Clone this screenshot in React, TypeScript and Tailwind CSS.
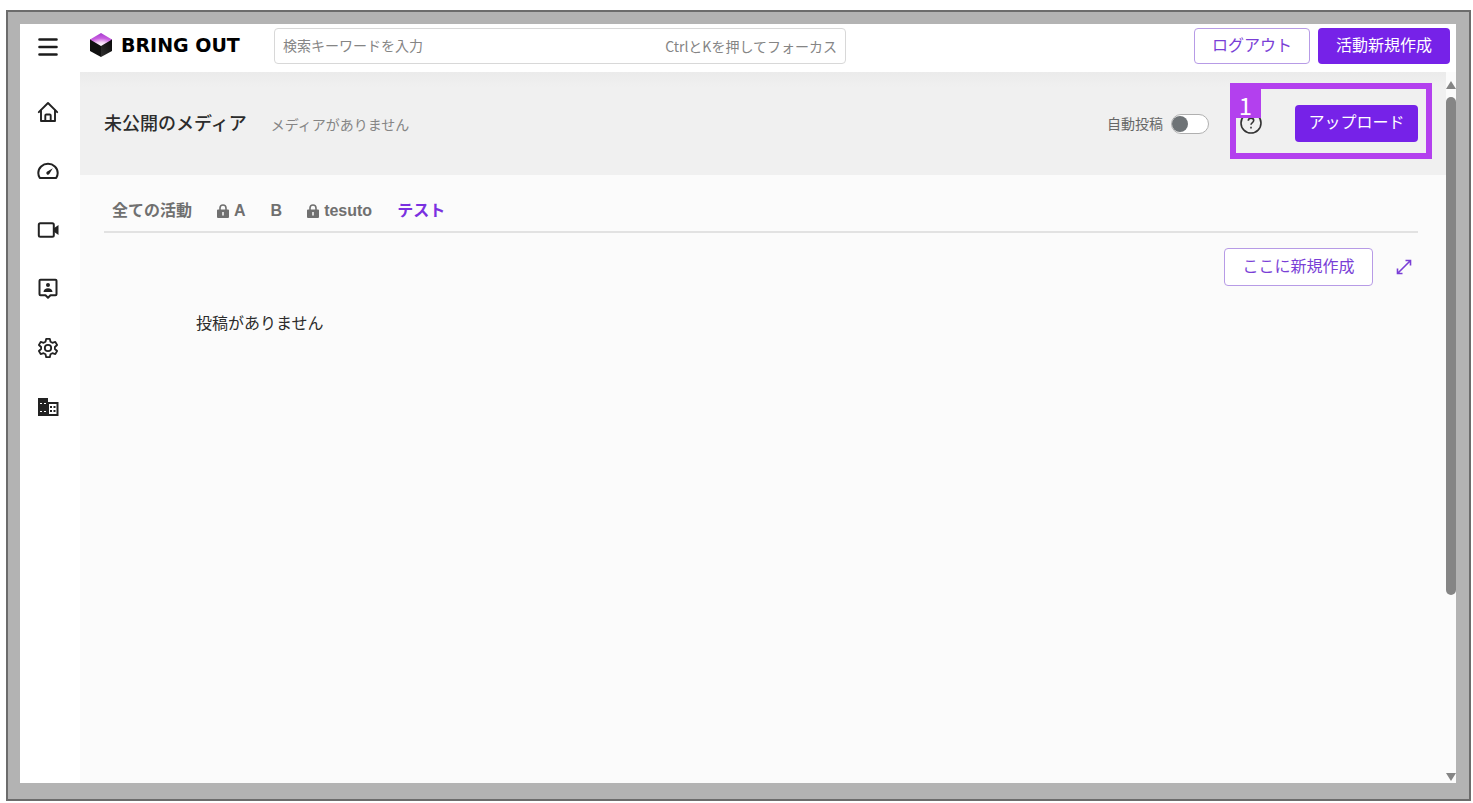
function MenuIcon() {
  return (
    <svg viewBox="0 0 20 20" className="size-5" stroke="#1c1c1c" strokeWidth="2.600" strokeLinecap="round" aria-hidden="true">
      <path d="M1.500 2.500h17M1.500 10h17M1.500 17.500h17" />
    </svg>
  );
}

function CubeLogo() {
  return (
    <svg viewBox="0 0 22 24" className="h-6 w-[22px]" aria-hidden="true">
      <defs>
        <radialGradient id="top" cx="0.5" cy="1" r="1">
          <stop offset="0" stopColor="#ffffff" />
          <stop offset="0.3" stopColor="#f3d3f7" />
          <stop offset="0.6" stopColor="#c95fe0" />
          <stop offset="1" stopColor="#a63ad0" />
        </radialGradient>
        <linearGradient id="right" x1="0" y1="1" x2="1" y2="0">
          <stop offset="0" stopColor="#303030" />
          <stop offset="1" stopColor="#080808" />
        </linearGradient>
      </defs>
      <path d="M0 6 11 12v12L0 18z" fill="#111" />
      <path d="M22 6 11 12v12l11-6z" fill="url(#right)" />
      <path d="M11 0l11 6.500L11 13 0 6.500z" fill="url(#top)" />
    </svg>
  );
}

function HomeIcon() {
  return (
    <svg viewBox="0 0 22 22" className="size-[22px]" fill="none" stroke="currentColor" strokeWidth="1.900" strokeLinejoin="round" strokeLinecap="round" aria-hidden="true">
      <path d="M1.800 11.200 11 2l9.200 9.200" />
      <path d="M4 9.500V20h14V9.500" />
      <path d="M8.300 20v-5.500a1 1 0 0 1 1-1h3.400a1 1 0 0 1 1 1V20" />
    </svg>
  );
}

function GaugeIcon() {
  return (
    <svg viewBox="0 0 22 22" className="size-[22px]" fill="none" stroke="currentColor" strokeWidth="2" strokeLinejoin="round" aria-hidden="true">
      <path d="M2.800 18C1.800 16.500 1.300 14.500 1.300 13a9.700 9.300 0 0 1 19.400 0c0 1.500-.5 3.500-1.500 5z" />
      <path d="M15.800 8.200l-5.900 3.500a1.700 1.700 0 1 0 2.400 2.400z" fill="currentColor" stroke="none" />
    </svg>
  );
}

function VideoIcon() {
  return (
    <svg viewBox="0 0 22 22" className="size-[22px]" fill="none" stroke="currentColor" strokeWidth="2" aria-hidden="true">
      <rect x="1.800" y="4.300" width="15" height="13.400" rx="1.500" />
      <path d="M16.500 9.500l5-3.500v10l-5-3.500z" fill="currentColor" stroke="none" />
    </svg>
  );
}

function ContactIcon() {
  return (
    <svg viewBox="0 0 22 22" className="size-[22px]" fill="none" stroke="currentColor" strokeWidth="2" strokeLinejoin="round" aria-hidden="true">
      <path d="M3.500 1.800h15a1 1 0 0 1 1 1v13.400a1 1 0 0 1-1 1h-5L11 19.700l-2.500-2.500h-5a1 1 0 0 1-1-1V2.800a1 1 0 0 1 1-1z" />
      <circle cx="11" cy="7" r="2" fill="currentColor" stroke="none" />
      <path d="M6.500 14c0-2.500 2-3.800 4.500-3.800s4.500 1.300 4.500 3.800z" fill="currentColor" stroke="none" />
    </svg>
  );
}

function GearIcon() {
  return (
    <svg viewBox="0 0 22 22" className="size-[22px]" fill="none" stroke="currentColor" strokeWidth="1.800" strokeLinejoin="round" aria-hidden="true">
      <path d="M9.200 1.800h3.600l.7 2.900 1.900 1.100 2.900-.9 1.800 3.100-2.200 2v2l2.200 2-1.800 3.100-2.900-.9-1.900 1.100-.7 2.900H9.200l-.7-2.900-1.900-1.100-2.900.9L1.900 14l2.200-2v-2l-2.200-2 1.800-3.100 2.900.9 1.900-1.100z" />
      <circle cx="11" cy="11" r="3.200" />
    </svg>
  );
}

function BuildingIcon() {
  return (
    <svg viewBox="0 0 22 22" className="size-[22px]" aria-hidden="true">
      <path d="M1 2h10v18H1z" fill="currentColor" />
      <path d="M11 7h9.500v12H11z" fill="#fff" stroke="currentColor" strokeWidth="2" />
      <path d="M3 7.500h2M7 7.500h2M3 15.500h2M7 15.500h2" stroke="#fff" strokeWidth="1.200" />
      <path d="M13 11h2M16.500 11h2M13 15h2M16.500 15h2" stroke="currentColor" strokeWidth="2" />
    </svg>
  );
}

function LockIcon() {
  return (
    <svg viewBox="0 0 12 14" className="h-[14px] w-3" aria-hidden="true">
      <path d="M3 6V4a3 3 0 0 1 6 0v2" fill="none" stroke="currentColor" strokeWidth="1.600" />
      <path d="M1 5.500h10a1 1 0 0 1 1 1V13a1 1 0 0 1-1 1H1a1 1 0 0 1-1-1V6.500a1 1 0 0 1 1-1z" fill="currentColor" />
      <path d="M6 8v3.500" stroke="#fafafa" strokeWidth="1.500" />
    </svg>
  );
}

function HelpIcon() {
  return (
    <svg viewBox="0 0 22 22" className="size-[22px]" fill="none" stroke="#333" strokeWidth="1.600" aria-hidden="true">
      <circle cx="11" cy="11" r="10" />
      <path d="M8.300 8.800c0-1.700 1.200-2.700 2.700-2.700s2.700 1 2.700 2.500c0 2-2.700 2-2.700 4.200M11 14.700v1.800" />
    </svg>
  );
}

function ExpandIcon() {
  return (
    <svg viewBox="0 0 16 16" className="size-4" fill="none" stroke="currentColor" strokeWidth="1.600" aria-hidden="true">
      <path d="M1.500 14.500l13-13M9.500 1.500h5v5M1.500 9.500v5h5" />
    </svg>
  );
}

const navItems = [
  { label: "ホーム", icon: <HomeIcon /> },
  { label: "ダッシュボード", icon: <GaugeIcon /> },
  { label: "ビデオ", icon: <VideoIcon /> },
  { label: "連絡先", icon: <ContactIcon /> },
  { label: "設定", icon: <GearIcon /> },
  { label: "会社", icon: <BuildingIcon /> },
];

const tabs = [
  { label: "全ての活動", locked: false },
  { label: "A", locked: true },
  { label: "B", locked: false },
  { label: "tesuto", locked: true },
  { label: "テスト", locked: false, active: true },
];

export default function App() {
  return (
    <div className="h-screen bg-white pt-[10px] pr-[2px] pb-[2px] pl-[6px] font-['Liberation_Sans','Noto_Sans_CJK_JP',sans-serif]">
      <div className="h-full border-2 border-[#6c6c6c] bg-[#b3b3b3] pt-3 pr-[13px] pb-4 pl-3">
        <div className="flex h-full flex-col bg-white text-[#2c2c2c]">
          <header className="flex h-12 shrink-0 items-start pt-1 pr-[6px]">
            <button type="button" aria-label="メニュー" className="flex h-[38px] w-[56px] items-center justify-center">
              <MenuIcon />
            </button>
            <a href="#" className="ml-[14px] flex h-[34px] items-center gap-[9px] text-black">
              <CubeLogo />
              <span className="w-[122px] whitespace-nowrap font-['DejaVu_Sans',sans-serif] text-[19px] font-bold">BRING OUT</span>
            </a>
            <div className="ml-[31px] flex h-9 w-[572px] items-center rounded border border-[#d8d8d8] px-2 text-[#858585]">
              <input
                type="text"
                aria-label="検索"
                placeholder="検索キーワードを入力"
                className="min-w-0 flex-1 text-[14px] outline-none placeholder:text-[#858585]"
              />
              <span className="font-['Noto_Sans_CJK_JP',sans-serif] text-[14px]">CtrlとKを押してフォーカス</span>
            </div>
            <div className="ml-auto flex gap-2">
              <button type="button" className="h-9 w-[116px] rounded border border-[#b79be6] text-[16px] text-[#7a3fd6]">
                ログアウト
              </button>
              <button type="button" className="h-9 w-[132px] rounded bg-[#7622e8] text-[16px] text-white">
                活動新規作成
              </button>
            </div>
          </header>

          <div className="flex min-h-0 flex-1">
            <nav className="flex w-[60px] shrink-0 flex-col items-center gap-[37px] pt-[29px] pr-1 text-[#222]">
              {navItems.map((item) => (
                <a key={item.label} href="#" aria-label={item.label}>
                  {item.icon}
                </a>
              ))}
            </nav>

            <main className="min-w-0 flex-1 bg-[#fbfbfb]">
              <section className="flex h-[103px] items-start bg-linear-to-b from-[#ebebeb] to-[#f0f0f0] to-15% pt-[11px] pr-[14px] pl-6">
                <div className="flex h-[82px] flex-1 items-center">
                  <div className="flex items-baseline gap-6">
                    <h1 className="text-[18px] font-medium">未公開のメディア</h1>
                    <p className="text-[14px] text-[#858585]">メディアがありません</p>
                  </div>
                  <label className="ml-auto flex items-center gap-2 text-[14px] text-[#666]">
                    自動投稿
                    <input type="checkbox" role="switch" className="peer sr-only" />
                    <span className="flex h-5 w-[38px] items-center rounded-full border border-[#b0b0b0] bg-white peer-checked:justify-end">
                      <span className="size-4 rounded-full bg-[#6e7376]" />
                    </span>
                  </label>
                </div>
                <div className="relative ml-[21px] flex h-[76px] w-[202px] items-center justify-between border-6 border-[#b340ee] pt-1 pr-2 pl-1">
                  <button type="button" aria-label="ヘルプ">
                    <HelpIcon />
                  </button>
                  <button type="button" className="h-[37px] w-[123px] rounded bg-[#7622e8] text-[16px] text-white">
                    アップロード
                  </button>
                  <span className="absolute top-0 left-0 flex h-[29px] w-[25px] items-center justify-center bg-[#b340ee] pt-[3px] pr-[6px] font-['Noto_Sans_CJK_JP',sans-serif] text-[24px] leading-none text-white">
                    1
                  </span>
                </div>
              </section>

              <section className="pt-4 pr-7 pl-6">
                <div role="tablist" className="flex h-[42px] items-center gap-[25px] border-b-2 border-[#e2e2e2] px-2 text-[16px] font-bold text-[#707070]">
                  {tabs.map((tab) => (
                    <button
                      key={tab.label}
                      type="button"
                      role="tab"
                      aria-selected={!!tab.active}
                      className="flex items-center gap-[5px] aria-selected:text-[#7a30e0]"
                    >
                      {tab.locked && <LockIcon />}
                      {tab.label}
                    </button>
                  ))}
                </div>
                <div className="mt-[15px] flex items-center justify-end gap-[23px] pr-[6px] text-[#7a3fd6]">
                  <button type="button" className="h-[38px] w-[149px] rounded border border-[#b79be6] bg-white text-[16px]">
                    ここに新規作成
                  </button>
                  <button type="button" aria-label="拡大">
                    <ExpandIcon />
                  </button>
                </div>
                <p className="mt-[26px] ml-[92px] text-[16px]">投稿がありません</p>
              </section>
            </main>

            <div aria-hidden="true" className="flex w-[10px] shrink-0 flex-col items-center bg-[#fbfbfb] pt-[9px] pb-[2px]">
              <svg viewBox="0 0 10 8" className="h-2 w-[10px]">
                <path d="M5 0l5 8H0z" fill="#858585" />
              </svg>
              <div className="mt-2 w-[10px] flex-[73] rounded-full bg-[#858585]" />
              <div className="flex-[26]" />
              <svg viewBox="0 0 10 8" className="h-2 w-[10px]">
                <path d="M0 0h10L5 8z" fill="#858585" />
              </svg>
            </div>
          </div>
        </div>
      </div>
    </div>
  );
}
